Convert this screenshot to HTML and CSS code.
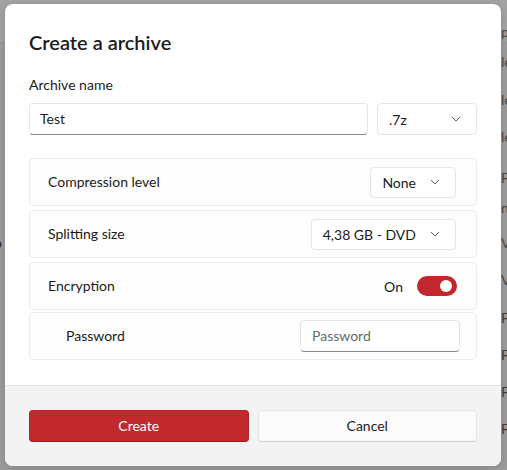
FILE: index.html
```html
<!DOCTYPE html>
<html>
<head>
<meta charset="utf-8">
<link rel="stylesheet" href="styles.css">
</head>
<body>
<div class="app">
  <div class="app-header"></div>
  <div class="app-side">o</div>
  <ul class="app-list">
    <li class="r1">p</li>
    <li class="r2">le</li>
    <li class="r3">le</li>
    <li class="r4">le</li>
    <li class="r5">Fi</li>
    <li class="r6">n</li>
    <li class="r7">V</li>
    <li class="r8">V</li>
    <li class="r9">F</li>
    <li class="r9">F</li>
    <li class="r9">F</li>
    <li class="r9">F</li>
  </ul>
</div>

<div class="dialog">
  <div class="content">
    <h1 class="title">Create a archive</h1>
    <div class="field-label">Archive name</div>
    <div class="name-row">
      <div class="textbox name-box">Test</div>
      <div class="combo ext-combo"><span>.7z</span><svg class="chev" width="10" height="6" viewBox="0 0 10 6"><path d="M1 1 L5 5 L9 1" fill="none" stroke="#5f5f5f" stroke-width="1"/></svg></div>
    </div>
    <div class="cards">
      <div class="card">
        <span class="card-label">Compression level</span>
        <div class="combo small-combo"><span>None</span><svg class="chev" width="10" height="6" viewBox="0 0 10 6"><path d="M1 1 L5 5 L9 1" fill="none" stroke="#5f5f5f" stroke-width="1"/></svg></div>
      </div>
      <div class="card">
        <span class="card-label">Splitting size</span>
        <div class="combo small-combo"><span>4,38 GB - DVD</span><svg class="chev" width="10" height="6" viewBox="0 0 10 6"><path d="M1 1 L5 5 L9 1" fill="none" stroke="#5f5f5f" stroke-width="1"/></svg></div>
      </div>
      <div class="card card-enc">
        <span class="card-label">Encryption</span>
        <div class="toggle-wrap"><span class="on">On</span><span class="toggle"><span class="knob"></span></span></div>
      </div>
      <div class="card card-sub">
        <span class="card-label sub-label">Password</span>
        <div class="textbox pw-box">Password</div>
      </div>
    </div>
  </div>
  <div class="footer">
    <div class="btn primary">Create</div>
    <div class="btn secondary">Cancel</div>
  </div>
</div>
</body>
</html>
```
FILE: styles.css
```css
* { box-sizing: border-box; }
html, body { margin: 0; padding: 0; }
body {
  width: 507px;
  height: 470px;
  overflow: hidden;
  background: #9c9c9c;
  font-family: "Segoe UI", "Lato", "Noto Sans", sans-serif;
  color: #1b1b1b;
  position: relative;
}
.app { position: relative; width: 507px; height: 470px; overflow: hidden; }
.app-header { height: 43px; background: #a3a3a3; border-bottom: 1px solid #959595; }
.app-side { position: absolute; left: -6px; top: 234px; font-size: 14px; color: #2a2a2a; }
.app-list {
  position: absolute; left: 501px; top: 22px; margin: 0; padding: 0; list-style: none;
  font-size: 14px; color: #4a4a4a; line-height: 20px;
}
.app-list li { height: 37px; }
.app-list .r1 { height: 30px; }
.app-list .r2 { height: 38px; }
.app-list .r4 { height: 41px; }
.app-list .r5 { height: 30px; }
.app-list .r6 { height: 35px; }
.app-list .r8 { height: 38px; }
.app-list .r9 { color: #3e3e3e; }

.dialog {
  position: absolute;
  left: 5px; top: 4px;
  width: 496px; height: 462px;
  background: #ffffff;
  border-radius: 8px;
  overflow: hidden;
  display: flex; flex-direction: column;
  box-shadow: 0 2px 10px rgba(0,0,0,0.15);
}
.content { padding: 24px 24px 0 24px; flex: 1; }
.title { margin: 0; font-size: 20px; font-weight: 600; line-height: 28px; height: 28px; }
.field-label { font-size: 14px; line-height: 20px; margin-top: 19px; }
.name-row { display: flex; gap: 9px; margin-top: 8px; }
.textbox {
  height: 32px; background: #fff; border: 1px solid #e5e5e5; border-bottom: 1px solid #868686;
  border-radius: 4px; font-size: 14px; line-height: 30px; padding: 0 10px;
}
.name-box { flex: 1; }
.combo {
  height: 32px; border: 1px solid #e5e5e5; border-radius: 4px; background: #fff;
  display: flex; align-items: center; justify-content: space-between; font-size: 14px;
}
.ext-combo { width: 100px; padding: 0 15px 0 11px; }
.chev { display: block; }
.cards { margin-top: 23px; display: flex; flex-direction: column; gap: 4px; }
.card {
  height: 48px; border: 1px solid #ececec; border-radius: 4px; background: #fdfdfd;
  display: flex; align-items: center; justify-content: space-between; padding: 0 20px 0 18px;
  font-size: 14px;
}
.card-label { line-height: 20px; }
.small-combo { height: 31px; padding: 0 15px 0 11px; gap: 14px; }
.card-enc { padding-right: 19px; }
.toggle-wrap { display: flex; align-items: center; gap: 14px; }
.toggle {
  width: 40px; height: 20px; border-radius: 10px; background: #c1272d; position: relative; display: block;
}
.knob { position: absolute; right: 5px; top: 4px; width: 12px; height: 12px; border-radius: 50%; background: #fff; }
.card-sub { margin-top: -2px; padding: 0 16px 0 36px; }
.pw-box { width: 160px; color: #6a6a6a; padding: 0 11px; }

.footer {
  height: 81px; background: #f3f3f3; border-top: 1px solid #e5e5e5;
  display: flex; gap: 9px; padding: 24px 24px 0 24px;
}
.btn {
  flex: 1; height: 32px; border-radius: 4px; font-size: 14px; line-height: 30px; text-align: center;
}
.primary { background: #c1292f; color: #fff; border: 1px solid #b4252b; border-bottom-color: #8f1c21; }
.secondary { background: #fbfbfb; color: #1b1b1b; border: 1px solid #e5e5e5; border-bottom-color: #cfcfcf; }
```
